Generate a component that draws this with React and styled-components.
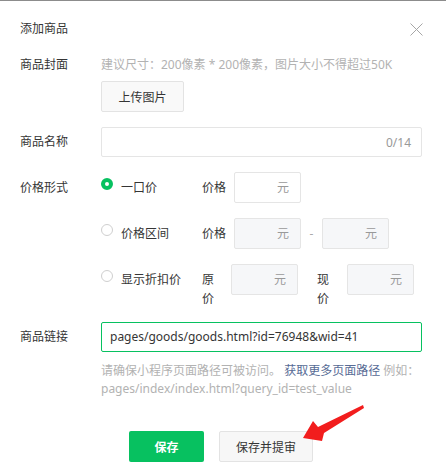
import React from 'react';
import styled, { createGlobalStyle } from 'styled-components';

const GlobalStyle = createGlobalStyle`
  body {
    margin: 0;
    background: #fff;
    font-family: "Noto Sans", "Noto Sans CJK SC", sans-serif;
    font-size: 12px;
    color: #353535;
  }
`;

const green = '#07c160';

const Dialog = styled.div`
  position: relative;
  width: 446px;
  height: 472px;
  box-sizing: border-box;
  border-top: 1px solid #8c8c8c;
  padding: 0 24px 0 20px;
  background: #fff;
`;

const Header = styled.div`
  display: flex;
  justify-content: space-between;
  align-items: center;
  padding-top: 19px;
  height: 18px;
`;

const Title = styled.div`
  font-size: 12px;
  line-height: 18px;
`;

const Close = styled.svg`
  width: 13px;
  height: 13px;
  margin-right: -1px;
`;

const Form = styled.div`
  margin-top: 18px;
`;

const FieldRow = styled.div`
  display: flex;
  margin-bottom: ${p => p.$gap || 0}px;
`;

const FieldLabel = styled.div`
  width: 81px;
  flex-shrink: 0;
  line-height: ${p => p.$lh || 18}px;
`;

const FieldBody = styled.div`
  flex: 1;
  min-width: 0;
`;

const Hint = styled.div`
  line-height: 18px;
  color: #b2b2b2;
`;

const UploadButton = styled.button`
  display: block;
  margin-top: 7px;
  width: 83px;
  height: 31px;
  border: 1px solid #e3e3e3;
  border-radius: 2px;
  background: #f9f9f9;
  font: inherit;
  color: #353535;
  padding: 0;
`;

const CountInput = styled.div`
  display: flex;
  justify-content: flex-end;
  align-items: center;
  height: 30px;
  box-sizing: border-box;
  border: 1px solid #e5e5e5;
  border-radius: 2px;
  padding-right: 10px;
  color: #999;
`;

const PriceOptions = styled.div`
  display: flex;
  flex-direction: column;
  gap: 15px;
`;

const PriceOption = styled.div`
  display: flex;
  align-items: flex-start;
  min-height: 31px;
`;

const RadioLabel = styled.div`
  width: 101px;
  flex-shrink: 0;
  display: flex;
  align-items: flex-start;
  padding-top: 6px;
  line-height: 19px;
`;

const Radio = styled.span`
  width: 12px;
  height: 12px;
  box-sizing: border-box;
  border-radius: 50%;
  margin-right: 8px;
  flex-shrink: 0;
  border: ${p => (p.$checked ? `4px solid ${green}` : '1px solid #cfcfcf')};
  background: #fff;
`;

const PriceLabel = styled.div`
  width: ${p => p.$w}px;
  flex-shrink: 0;
  margin-left: ${p => p.$ml || 0}px;
  margin-right: 8px;
  padding-top: 6px;
  line-height: 19px;
`;

const PriceInput = styled.div`
  width: 67px;
  height: 31px;
  flex-shrink: 0;
  box-sizing: border-box;
  border: 1px solid #e5e5e5;
  border-radius: 2px;
  background: ${p => (p.$disabled ? '#f6f7f9' : '#fff')};
  text-align: right;
  padding-right: 11px;
  line-height: 29px;
  color: #999;
`;

const Dash = styled.div`
  width: 21px;
  text-align: center;
  padding-top: 6px;
  line-height: 19px;
  color: #aaa;
`;

const LinkInput = styled.div`
  height: 30px;
  box-sizing: border-box;
  border: 1px solid ${green};
  border-radius: 2px;
  padding-left: 8px;
  line-height: 28px;
  font-size: 12px;
  color: #353535;
  white-space: nowrap;
  overflow: hidden;
`;

const Help = styled.div`
  margin-top: 10px;
  line-height: 18px;
  color: #b2b2b2;
`;

const HelpLink = styled.span`
  color: #576b95;
`;

const Footer = styled.div`
  display: flex;
  justify-content: center;
  gap: 15px;
  margin-top: 33px;
`;

const Button = styled.button`
  height: 31px;
  width: ${p => p.$w}px;
  padding: 0;
  border-radius: 2px;
  font: inherit;
  font-weight: ${p => (p.$primary ? 700 : 400)};
  color: ${p => (p.$primary ? '#fff' : '#353535')};
  background: ${p => (p.$primary ? green : '#f7f7f7')};
  border: ${p => (p.$primary ? 'none' : '1px solid #e3e3e3')};
`;

const Arrow = styled.svg`
  position: absolute;
  left: 300px;
  top: 403px;
  width: 66px;
  height: 40px;
  pointer-events: none;
`;

export default function App() {
  return (
    <>
      <GlobalStyle />
      <Dialog>
        <Header>
          <Title>添加商品</Title>
          <Close viewBox="0 0 13 13">
            <path d="M0.5 0.5 L12.5 12.5 M12.5 0.5 L0.5 12.5" stroke="#a6a6a6" strokeWidth="1" fill="none" />
          </Close>
        </Header>
        <Form>
          <FieldRow $gap={15}>
            <FieldLabel>商品封面</FieldLabel>
            <FieldBody>
              <Hint>建议尺寸：200像素 * 200像素，图片大小不得超过50K</Hint>
              <UploadButton>上传图片</UploadButton>
            </FieldBody>
          </FieldRow>
          <FieldRow $gap={15}>
            <FieldLabel $lh={30}>商品名称</FieldLabel>
            <FieldBody>
              <CountInput>0/14</CountInput>
            </FieldBody>
          </FieldRow>
          <FieldRow $gap={14}>
            <FieldLabel $lh={31}>价格形式</FieldLabel>
            <FieldBody>
              <PriceOptions>
                <PriceOption>
                  <RadioLabel><Radio $checked />一口价</RadioLabel>
                  <PriceLabel $w={24}>价格</PriceLabel>
                  <PriceInput>元</PriceInput>
                </PriceOption>
                <PriceOption>
                  <RadioLabel><Radio />价格区间</RadioLabel>
                  <PriceLabel $w={24}>价格</PriceLabel>
                  <PriceInput $disabled>元</PriceInput>
                  <Dash>-</Dash>
                  <PriceInput $disabled>元</PriceInput>
                </PriceOption>
                <PriceOption>
                  <RadioLabel><Radio />显示折扣价</RadioLabel>
                  <PriceLabel $w={21}>原价</PriceLabel>
                  <PriceInput $disabled>元</PriceInput>
                  <PriceLabel $w={22} $ml={19}>现价</PriceLabel>
                  <PriceInput $disabled>元</PriceInput>
                </PriceOption>
              </PriceOptions>
            </FieldBody>
          </FieldRow>
          <FieldRow>
            <FieldLabel $lh={30}>商品链接</FieldLabel>
            <FieldBody>
              <LinkInput>pages/goods/goods.html?id=76948&amp;wid=41</LinkInput>
              <Help>
                请确保小程序页面路径可被访问。 <HelpLink>获取更多页面路径</HelpLink> 例如：
                <div>pages/index/index.html?query_id=test_value</div>
              </Help>
            </FieldBody>
          </FieldRow>
          <Footer>
            <Button $primary $w={75}>保存</Button>
            <Button $w={94}>保存并提审</Button>
          </Footer>
        </Form>
        <Arrow viewBox="0 0 66 40">
          <polygon points="3,34 13,17 18,23 63,1 64,4 24,29 22,37" fill="#f21d1d" />
        </Arrow>
      </Dialog>
    </>
  );
}
